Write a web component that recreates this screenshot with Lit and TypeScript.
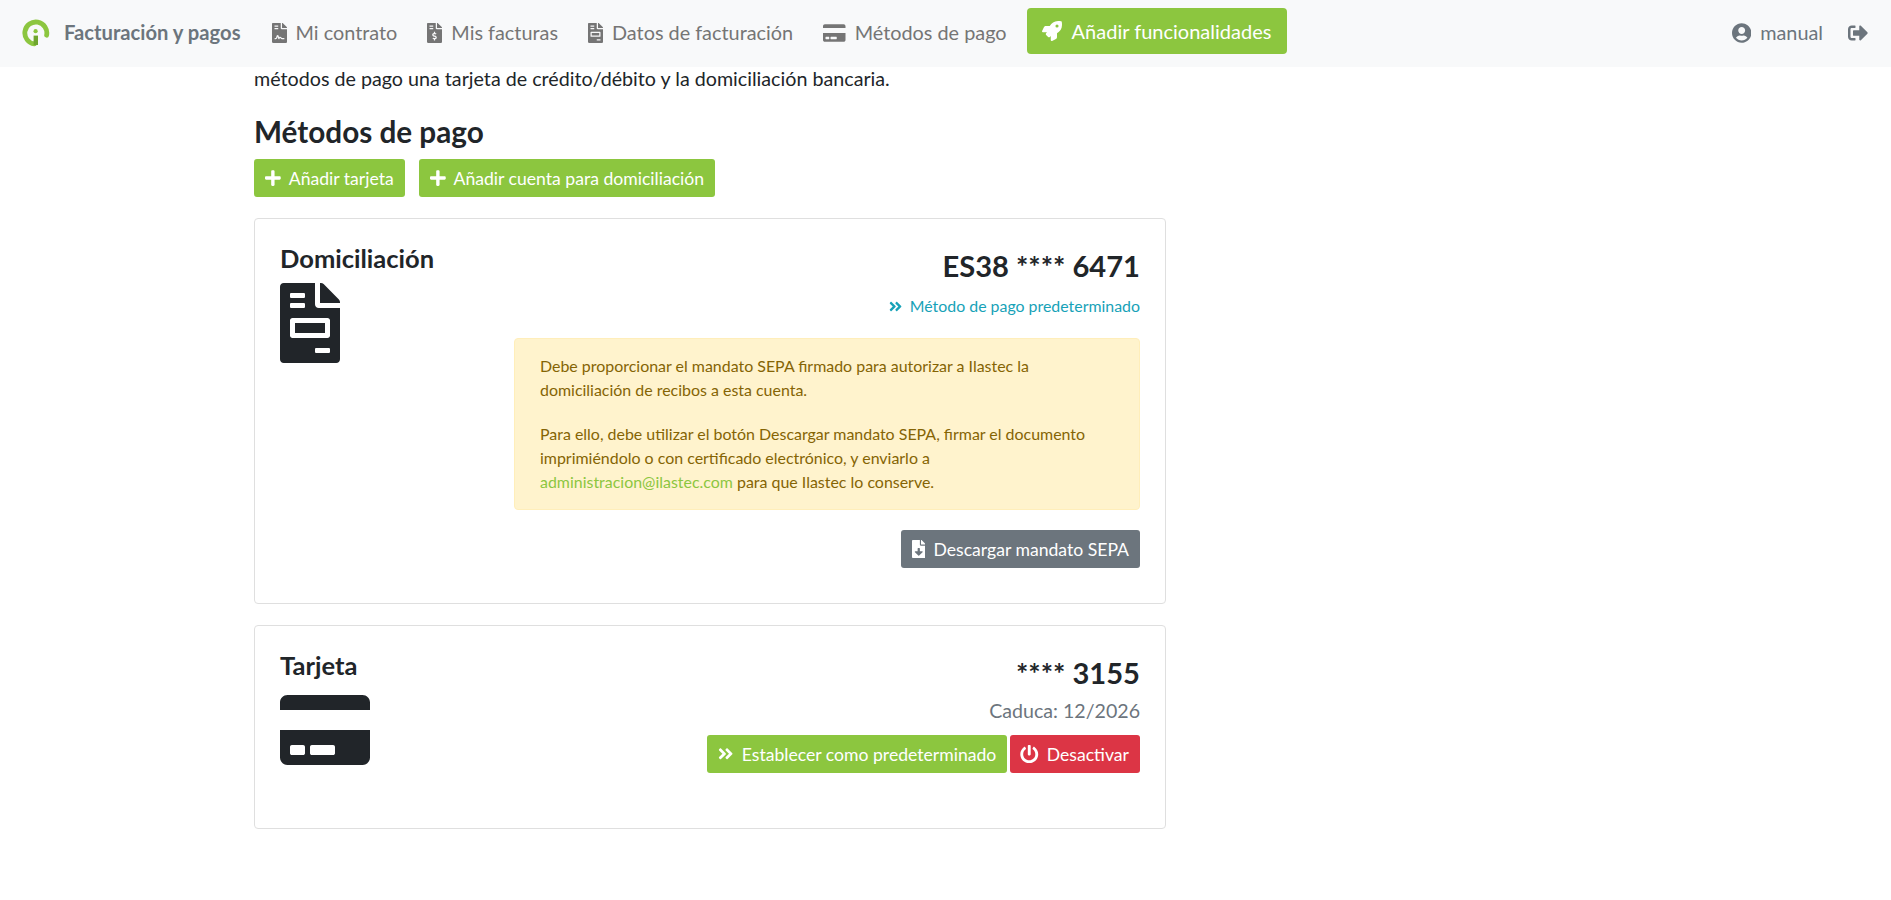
import {LitElement, html, css, svg} from 'lit';
import {customElement} from 'lit/decorators.js';

const ICONS: Record<string, [number, string]> = {
  contract: [384, 'M224 136V0H24C10.7 0 0 10.7 0 24v464c0 13.3 10.7 24 24 24h336c13.3 0 24-10.7 24-24V160H248c-13.2 0-24-10.8-24-24zM64 72c0-4.42 3.58-8 8-8h80c4.42 0 8 3.58 8 8v16c0 4.42-3.58 8-8 8H72c-4.42 0-8-3.58-8-8V72zm0 64c0-4.42 3.58-8 8-8h80c4.42 0 8 3.58 8 8v16c0 4.42-3.58 8-8 8H72c-4.42 0-8-3.58-8-8v-16zm192.81 248H304c8.84 0 16 7.16 16 16s-7.16 16-16 16h-47.19c-16.45 0-31.27-9.14-38.64-23.86-2.95-5.92-8.09-6.52-10.17-6.52s-7.22.59-10.02 6.19l-7.67 15.34a15.986 15.986 0 0 1-14.31 8.84c-.38 0-.75-.02-1.14-.05-6.45-.45-12-4.75-14.03-10.89L144 354.59l-10.61 31.88c-5.89 17.66-22.38 29.53-41 29.53H80c-8.84 0-16-7.16-16-16s7.16-16 16-16h12.39c4.83 0 9.11-3.08 10.64-7.66l18.19-54.64c3.3-9.81 12.44-16.41 22.78-16.41s19.48 6.59 22.77 16.41l13.88 41.64c19.77-16.19 54.05-9.7 66 14.16 2.02 4.06 5.96 6.5 10.16 6.5zM377 105L279.1 7c-4.5-4.5-10.6-7-17-7H256v128h128v-6.1c0-6.3-2.5-12.4-7-16.9z'],
  dollar: [384, 'M377 105L279.1 7c-4.5-4.5-10.6-7-17-7H256v128h128v-6.1c0-6.3-2.5-12.4-7-16.9zm-153 31V0H24C10.7 0 0 10.7 0 24v464c0 13.3 10.7 24 24 24h336c13.3 0 24-10.7 24-24V160H248c-13.2 0-24-10.8-24-24zM64 72c0-4.42 3.58-8 8-8h80c4.42 0 8 3.58 8 8v16c0 4.42-3.58 8-8 8H72c-4.42 0-8-3.58-8-8V72zm0 80v-16c0-4.42 3.58-8 8-8h80c4.42 0 8 3.58 8 8v16c0 4.42-3.58 8-8 8H72c-4.42 0-8-3.58-8-8zm144 263.88V440c0 4.42-3.58 8-8 8h-16c-4.42 0-8-3.58-8-8v-24.29c-11.29-.58-22.27-4.52-31.37-11.35-3.9-2.93-4.1-8.77-.57-12.14l11.75-11.21c2.77-2.64 6.89-2.76 10.13-.73 3.87 2.42 8.26 3.72 12.82 3.72h28.11c6.5 0 11.8-5.92 11.8-13.19 0-5.95-3.61-11.19-8.77-12.73l-45-13.5c-18.59-5.58-31.58-23.42-31.58-43.39 0-24.52 19.05-44.44 42.67-45.07V232c0-4.42 3.58-8 8-8h16c4.42 0 8 3.58 8 8v24.29c11.29.58 22.27 4.51 31.37 11.35 3.9 2.93 4.1 8.77.57 12.14l-11.75 11.21c-2.77 2.64-6.89 2.76-10.13.73-3.87-2.43-8.26-3.72-12.82-3.72h-28.11c-6.5 0-11.8 5.92-11.8 13.19 0 5.95 3.61 11.19 8.77 12.73l45 13.5c18.59 5.58 31.58 23.42 31.58 43.39 0 24.53-19.05 44.44-42.67 45.07z'],
  invoice: [384, 'M288 256H96v64h192v-64zm89-151L279.1 7c-4.5-4.5-10.6-7-17-7H256v128h128v-6.1c0-6.3-2.5-12.4-7-16.9zm-153 31V0H24C10.7 0 0 10.7 0 24v464c0 13.3 10.7 24 24 24h336c13.3 0 24-10.7 24-24V160H248c-13.2 0-24-10.8-24-24zM64 72c0-4.42 3.58-8 8-8h80c4.42 0 8 3.58 8 8v16c0 4.42-3.58 8-8 8H72c-4.42 0-8-3.58-8-8V72zm0 64c0-4.42 3.58-8 8-8h80c4.42 0 8 3.58 8 8v16c0 4.42-3.58 8-8 8H72c-4.42 0-8-3.58-8-8v-16zm256 304c0 4.42-3.58 8-8 8h-80c-4.42 0-8-3.58-8-8v-16c0-4.42 3.58-8 8-8h80c4.42 0 8 3.58 8 8v16zm0-200v96c0 8.84-7.16 16-16 16H80c-8.84 0-16-7.16-16-16v-96c0-8.84 7.16-16 16-16h224c8.84 0 16 7.16 16 16z'],
  card: [576, 'M0 432c0 26.5 21.5 48 48 48h480c26.5 0 48-21.5 48-48V256H0v176zm192-68c0-6.6 5.4-12 12-12h136c6.6 0 12 5.4 12 12v40c0 6.6-5.4 12-12 12H204c-6.6 0-12-5.4-12-12v-40zm-128 0c0-6.6 5.4-12 12-12h72c6.6 0 12 5.4 12 12v40c0 6.6-5.4 12-12 12H76c-6.6 0-12-5.4-12-12v-40zM576 80v48H0V80c0-26.5 21.5-48 48-48h480c26.5 0 48 21.5 48 48z'],
  rocket: [512, 'M505.12019,19.09375c-1.18945-5.53125-6.65819-11-12.207-12.1875C460.716,0,435.507,0,410.40747,0,307.17523,0,245.26909,55.20312,199.05238,128H94.83772c-16.34763.01562-35.55658,11.875-42.88664,26.48438L2.51562,253.29688A28.4,28.4,0,0,0,0,264a24.00867,24.00867,0,0,0,24.00582,24H127.81618l-22.47457,22.46875c-11.36521,11.36133-12.99607,32.25781,0,45.25L156.24582,406.625c11.15623,11.1875,32.15619,13.15625,45.27726,0l22.47457-22.46875V488a24.00867,24.00867,0,0,0,24.00581,24,28.55934,28.55934,0,0,0,10.707-2.51562l98.72834-49.39063c14.62888-7.29687,26.50776-26.5,26.50776-42.85937V312.79688c72.59753-46.3125,128.03493-108.40626,128.03493-211.09376C512.07526,76.5,512.07526,51.29688,505.12019,19.09375ZM384.04033,168A40,40,0,1,1,424.05,128,40.02322,40.02322,0,0,1,384.04033,168Z'],
  user: [496, 'M248 8C111 8 0 119 0 256s111 248 248 248 248-111 248-248S385 8 248 8zm0 96c48.6 0 88 39.4 88 88s-39.4 88-88 88-88-39.4-88-88 39.4-88 88-88zm0 344c-58.7 0-111.3-26.6-146.5-68.2 18.8-35.4 55.6-59.8 98.5-59.8 2.4 0 4.8.4 7.1 1.1 13 4.2 26.6 6.9 40.9 6.9 14.3 0 28-2.7 40.9-6.9 2.3-.7 4.7-1.1 7.1-1.1 42.9 0 79.7 24.4 98.5 59.8C359.3 421.4 306.7 448 248 448z'],
  signout: [512, 'M497 273L329 441c-15 15-41 4.5-41-17v-96H152c-13.3 0-24-10.7-24-24v-96c0-13.3 10.7-24 24-24h136V88c0-21.4 25.9-32 41-17l168 168c9.3 9.4 9.3 24.6 0 34zM192 436v-40c0-6.6-5.4-12-12-12H96c-17.7 0-32-14.3-32-32V160c0-17.7 14.3-32 32-32h84c6.6 0 12-5.4 12-12V76c0-6.6-5.4-12-12-12H96c-53 0-96 43-96 96v192c0 53 43 96 96 96h84c6.6 0 12-5.4 12-12z'],
  plus: [448, 'M416 208H272V64c0-17.67-14.33-32-32-32h-32c-17.67 0-32 14.33-32 32v144H32c-17.67 0-32 14.33-32 32v32c0 17.67 14.33 32 32 32h144v144c0 17.67 14.33 32 32 32h32c17.67 0 32-14.33 32-32V304h144c17.67 0 32-14.33 32-32v-32c0-17.67-14.33-32-32-32z'],
  angles: [448, 'M224.3 273l-136 136c-9.4 9.4-24.6 9.4-33.9 0l-22.6-22.6c-9.4-9.4-9.4-24.6 0-33.9l96.4-96.4-96.4-96.4c-9.4-9.4-9.4-24.6 0-33.9L54.3 103c9.4-9.4 24.6-9.4 33.9 0l136 136c9.5 9.4 9.5 24.6.1 34zm192-34l-136-136c-9.4-9.4-24.6-9.4-33.9 0l-22.6 22.6c-9.4 9.4-9.4 24.6 0 33.9l96.4 96.4-96.4 96.4c-9.4 9.4-9.4 24.6 0 33.9l22.6 22.6c9.4 9.4 24.6 9.4 33.9 0l136-136c9.4-9.2 9.4-24.4 0-33.8z'],
  download: [384, 'M224 136V0H24C10.7 0 0 10.7 0 24v464c0 13.3 10.7 24 24 24h336c13.3 0 24-10.7 24-24V160H248c-13.2 0-24-10.8-24-24zm76.45 211.36l-96.42 95.7c-6.65 6.61-17.39 6.61-24.04 0l-96.42-95.7C73.42 337.29 80.54 320 94.82 320H160v-80c0-8.84 7.16-16 16-16h32c8.84 0 16 7.16 16 16v80h65.18c14.28 0 21.4 17.29 11.27 27.36zM377 105L279.1 7c-4.5-4.5-10.6-7-17-7H256v128h128v-6.1c0-6.3-2.5-12.4-7-16.9z'],
  power: [512, 'M400 54.1c63 45 104 118.6 104 201.9 0 136.8-110.8 247.7-247.5 248C120 504.3 8.2 393 8 256.4 7.9 173.1 48.9 99.3 111.8 54.2c11.7-8.3 28-4.8 35 7.7L162.6 90c5.9 10.5 3.1 23.8-6.6 31-41.5 30.8-68 79.6-68 134.9-.1 92.3 74.5 168.1 168 168.1 91.6 0 168.6-74.2 168-169.1-.3-51.8-24.7-101.8-68.1-134-9.7-7.2-12.4-20.5-6.5-30.9l15.8-28.1c7-12.4 23.2-16.1 34.8-7.9zM296 264V24c0-13.3-10.7-24-24-24h-32c-13.3 0-24 10.7-24 24v240c0 13.3 10.7 24 24 24h32c13.3 0 24-10.7 24-24z'],
};

// same proportions as an icon font: height = size, width follows the viewBox
function icon(name: string, size: number) {
  const [w, d] = ICONS[name];
  return html`<svg class="ico" viewBox="0 0 ${w} 512" width=${(size * w) / 512} height=${size} fill="currentColor">${svg`<path d=${d}></path>`}</svg>`;
}

const NAV = [
  {ic: 'contract', label: 'Mi contrato'},
  {ic: 'dollar', label: 'Mis facturas'},
  {ic: 'invoice', label: 'Datos de facturación'},
  {ic: 'card', label: 'Métodos de pago'},
];

@customElement('app-root')
export class AppRoot extends LitElement {
  render() {
    return html`
      <nav class="navbar">
        <svg class="logo" viewBox="0 0 28 28" width="28" height="28">
          <path d="M24.6 16.2 A11 11 0 1 0 12.4 24.9" fill="none" stroke="#8cc63f" stroke-width="4.8" stroke-linecap="round"></path>
          <circle cx="13.6" cy="12.2" r="2.1" fill="#8cc63f"></circle>
          <path d="M11.6 16.6h4.4v9.4h-4.4z" fill="#6fa52f"></path>
        </svg>
        <span class="brand">Facturación y pagos</span>
        ${NAV.map(n => html`<a class="nav-link">${icon(n.ic, 20)}<span>${n.label}</span></a>`)}
        <a class="cta">${icon('rocket', 20)}<span>Añadir funcionalidades</span></a>
        <span class="spacer"></span>
        <a class="nav-link user">${icon('user', 20)}<span>manual</span></a>
        <a class="nav-link out">${icon('signout', 20)}</a>
      </nav>
      <main>
        <p class="intro">métodos de pago una tarjeta de crédito/débito y la domiciliación bancaria.</p>
        <h3>Métodos de pago</h3>
        <div class="add-row">
          <a class="btn green">${icon('plus', 18)}<span>Añadir tarjeta</span></a>
          <a class="btn green">${icon('plus', 18)}<span>Añadir cuenta para domiciliación</span></a>
        </div>

        <section class="card first">
          <div class="side">
            <h4>Domiciliación</h4>
            ${icon('invoice', 80)}
          </div>
          <div class="detail">
            <div class="number">ES38 **** 6471</div>
            <div class="default">${icon('angles', 15)}<span>Método de pago predeterminado</span></div>
            <div class="alert">
              <p>Debe proporcionar el mandato SEPA firmado para autorizar a Ilastec la domiciliación de recibos a esta cuenta.</p>
              <p>Para ello, debe utilizar el botón Descargar mandato SEPA, firmar el documento imprimiéndolo o con certificado electrónico, y enviarlo a <a>administracion@ilastec.com</a> para que Ilastec lo conserve.</p>
            </div>
            <a class="btn grey">${icon('download', 18)}<span>Descargar mandato SEPA</span></a>
          </div>
        </section>

        <section class="card second">
          <div class="side">
            <h4>Tarjeta</h4>
            ${icon('card', 80)}
          </div>
          <div class="detail">
            <div class="number">**** 3155</div>
            <div class="expiry">Caduca: 12/2026</div>
            <div class="actions">
              <a class="btn green">${icon('angles', 17.6)}<span>Establecer como predeterminado</span></a>
              <a class="btn red">${icon('power', 18.5)}<span>Desactivar</span></a>
            </div>
          </div>
        </section>
      </main>
    `;
  }

  static styles = css`
    :host {
      display: block;
      font-family: Lato, 'Liberation Sans', sans-serif;
      font-size: 16px;
      color: #212529;
      background: #fff;
      min-height: 900px;
    }
    .ico {
      display: block;
      flex: none;
    }
    .navbar {
      display: flex;
      align-items: center;
      height: 67px;
      padding-left: 22px;
      padding-right: 23px;
      padding-bottom: 2px;
      background: #f8f9fa;
      box-sizing: border-box;
    }
    .logo {
      flex: none;
      margin-right: 14px;
      margin-top: 1px;
    }
    .brand {
      font-size: 20.2px;
      font-weight: 700;
      color: #6c757d;
      margin-right: 31px;
      margin-bottom: 2px;
    }
    .nav-link {
      display: flex;
      align-items: center;
      gap: 9px;
      font-size: 19.85px;
      color: #757575;
      margin-right: 30px;
    }
    .nav-link span {
      margin-bottom: 2px;
    }
    .cta {
      display: flex;
      align-items: center;
      gap: 10px;
      height: 46px;
      box-sizing: border-box;
      padding: 0 16px 0 15px;
      border-radius: 4px;
      background: #8cc63f;
      color: #fff;
      font-size: 20px;
      margin-left: -10px;
      margin-bottom: 3px;
    }
    .spacer {
      flex: 1;
    }
    .user {
      color: #6c757d;
      margin-right: 25px;
    }
    .out {
      margin-right: 0;
      color: #6c757d;
    }
    main {
      width: 912px;
      margin-left: 254px;
    }
    .intro {
      margin: 0 0 24px;
      font-size: 19.7px;
      line-height: 24px;
    }
    h3 {
      margin: 0 0 10px;
      font-size: 29.7px;
      line-height: 34px;
      font-weight: 700;
    }
    .add-row {
      display: flex;
      gap: 14px;
      margin-bottom: 21px;
    }
    .btn {
      display: inline-flex;
      align-items: center;
      gap: 8px;
      height: 38px;
      box-sizing: border-box;
      padding: 0 11px;
      border-radius: 3px;
      color: #fff;
      font-size: 17.6px;
    }
    .green {
      background: #8cc63f;
    }
    .grey {
      background: #6c757d;
    }
    .red {
      background: #dc3545;
      padding-left: 10px;
    }
    .card {
      display: flex;
      justify-content: space-between;
      box-sizing: border-box;
      border: 1px solid #dfdfdf;
      border-radius: 4px;
      padding: 25px;
    }
    .first {
      height: 386px;
      margin-bottom: 21px;
    }
    .second {
      height: 204px;
    }
    h4 {
      margin: 0 0 10px;
      font-size: 25.5px;
      line-height: 29px;
      font-weight: 700;
    }
    .detail {
      display: flex;
      flex-direction: column;
      align-items: flex-end;
    }
    .number {
      font-size: 29.1px;
      line-height: 36px;
      font-weight: 700;
      margin-top: 4px;
    }
    .default {
      display: flex;
      align-items: center;
      gap: 8px;
      color: #17a2b8;
      font-size: 15.9px;
      line-height: 24px;
      margin: 10px 0 20px;
    }
    .alert {
      box-sizing: border-box;
      width: 626px;
      height: 172px;
      padding: 15px 25px;
      background: #fff3cd;
      border: 1px solid #ffeeba;
      border-radius: 4px;
      color: #856404;
      font-size: 15.95px;
      line-height: 24px;
      margin-bottom: 20px;
    }
    .alert p {
      margin: 0 0 20px;
    }
    .alert a {
      color: #8cc63f;
    }
    .expiry {
      color: #6c757d;
      font-size: 19.6px;
      line-height: 30px;
      margin-top: 5px;
    }
    .actions {
      display: flex;
      gap: 3px;
      margin-top: 9px;
    }
  `;
}
